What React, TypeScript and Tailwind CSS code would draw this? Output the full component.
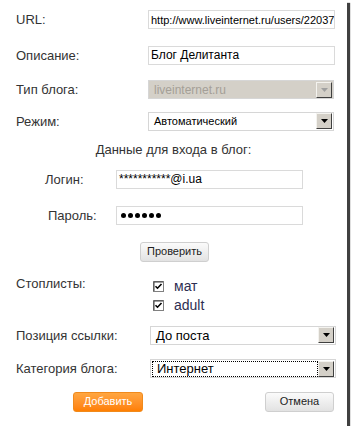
import React from 'react';

const font = { fontFamily: '"Liberation Sans", Arial, sans-serif' };

const Arrow = ({ disabled }: { disabled?: boolean }) => (
  <div className="flex h-[16px] w-[16px] items-center justify-center border border-t-[#f4f3ef] border-l-[#f4f3ef] border-r-[#404040] border-b-[#404040] bg-[#d4d0c8]">
    <svg width="7" height="4" viewBox="0 0 7 4">
      <path d="M0 0h7L3.5 4z" fill={disabled ? '#a0a0a0' : '#000'} />
    </svg>
  </div>
);

const TextInput = ({ value, size = 'text-[12px]' }: { value: string; size?: string }) => (
  <div className={`flex h-[19px] w-[187px] items-center overflow-hidden whitespace-nowrap border border-[#dadada] bg-white pl-[2px] ${size} text-black`}>
    {value}
  </div>
);

const Select = ({ value, disabled, focused, size = 'text-[12px]' }: { value: string; disabled?: boolean; focused?: boolean; size?: string }) => (
  <div className={`flex h-[19px] w-[186px] items-center justify-between border border-[#d6d6d6] pr-[1px] ${disabled ? 'bg-[#d4d0c8] text-[#a49f97]' : 'bg-white text-black'} ${size}`}>
    <div className={`ml-[1px] flex h-[16px] flex-1 items-center pl-[4px] ${focused ? 'border border-dotted border-black' : ''}`}>
      {value}
    </div>
    <Arrow disabled={disabled} />
  </div>
);

const Check = ({ label }: { label: string }) => (
  <div className="flex items-center gap-[10px]">
    <svg width="11" height="11" viewBox="0 0 11 11">
      <rect x="0.5" y="0.5" width="10" height="10" fill="#fff" stroke="#808080" />
      <path d="M1 1h9" stroke="#404040" />
      <path d="M1 1v9" stroke="#404040" />
      <path d="M2.5 5.2l2 2 4-4.2" stroke="#000" strokeWidth="1.6" fill="none" />
    </svg>
    <span className="text-[14px] leading-[19px] text-[#2e2e52]">{label}</span>
  </div>
);

const Row = ({ label, children, className = '' }: { label: string; children: React.ReactNode; className?: string }) => (
  <div className={`flex items-center ${className}`}>
    <div className="w-[148px] pl-[16px] text-[13px] text-[#333]">{label}</div>
    {children}
  </div>
);

const GrayButton = ({ label, width }: { label: string; width: string }) => (
  <div className={`flex h-[20px] ${width} items-center justify-center rounded-[3px] border border-[#cfcfcf] bg-gradient-to-b from-[#fbfbfb] to-[#e2e2e2] text-[11px] text-[#222]`}>
    {label}
  </div>
);

export default function App() {
  return (
    <div className="bg-white" style={font}>
      <div className="flex h-[426px] w-[347px] flex-col bg-white shadow-[3px_3px_1px_rgba(0,0,0,0.75)]">
        <Row label="URL:" className="mt-[10px]">
          <TextInput value="http://www.liveinternet.ru/users/22037" size="text-[11px]" />
        </Row>
        <Row label="Описание:" className="mt-[16px]">
          <TextInput value="Блог Делитанта" />
        </Row>
        <Row label="Тип блога:" className="mt-[15px]">
          <Select value="liveinternet.ru" disabled />
        </Row>
        <Row label="Режим:" className="mt-[12px]">
          <Select value="Автоматический" size="text-[11px]" />
        </Row>

        <div className="mt-[9px] text-center text-[13px] text-[#333]">Данные для входа в блог:</div>

        <div className="mt-[10px] flex items-center">
          <div className="w-[116px] pl-[45px] text-[13px] text-[#333]">Логин:</div>
          <TextInput value="***********@i.ua" />
        </div>
        <div className="mt-[17px] flex items-center">
          <div className="w-[116px] pl-[48px] text-[13px] text-[#333]">Пароль:</div>
          <div className="flex h-[19px] w-[187px] items-center gap-[2px] border border-[#dadada] bg-white pl-[4px]">
            {[0, 1, 2, 3, 4, 5].map(i => (
              <span key={i} className="h-[5px] w-[5px] rounded-full bg-black" />
            ))}
          </div>
        </div>

        <div className="mt-[16px] flex pl-[140px]">
          <GrayButton label="Проверить" width="w-[69px]" />
        </div>

        <div className="mt-[15px] flex items-start">
          <div className="w-[153px] pl-[16px] text-[13px] leading-[14px] text-[#333]">Стоплисты:</div>
          <div className="flex flex-col">
            <Check label="мат" />
            <Check label="adult" />
          </div>
        </div>

        <div className="mt-[11px] flex items-center">
          <div className="w-[150px] pl-[16px] text-[13px] text-[#333]">Позиция ссылки:</div>
          <Select value="До поста" size="text-[13px]" />
        </div>
        <div className="mt-[14px] flex items-center">
          <div className="w-[150px] pl-[16px] text-[13px] text-[#333]">Категория блога:</div>
          <Select value="Интернет" focused size="text-[13px]" />
        </div>

        <div className="mt-[13px] flex items-center justify-between pl-[73px] pr-[13px]">
          <div className="flex h-[20px] w-[70px] items-center justify-center rounded-[3px] border border-[#f08a1c] bg-gradient-to-b from-[#ffa640] to-[#ff7f00] text-[11px] text-white">
            Добавить
          </div>
          <GrayButton label="Отмена" width="w-[69px]" />
        </div>
      </div>
    </div>
  );
}
